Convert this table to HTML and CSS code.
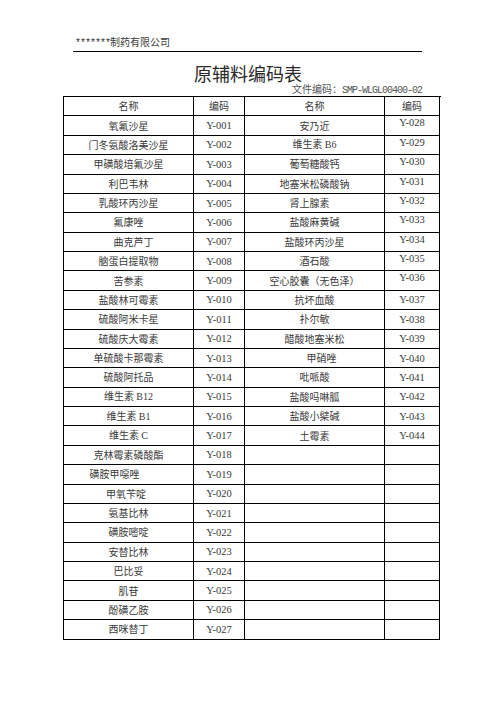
FILE: index.html
```html
<!DOCTYPE html>
<html lang="zh-CN">
<head>
<meta charset="utf-8">
<title>原辅料编码表</title>
<link rel="stylesheet" href="styles.css">
</head>
<body>
<div class="page">
  <div class="company"><span class="lat">*******</span>制药有限公司</div>
  <div class="title">原辅料编码表</div>
  <div class="docno">文件编码：<span class="lat">SMP-WLGL00400-02</span></div>
  <div class="sheet">
    <div class="cell head">名称</div><div class="cell head">编码</div><div class="cell head">名称</div><div class="cell head">编码</div>

    <div class="cell">氧氟沙星</div><div class="cell code">Y-001</div><div class="cell">安乃近</div><div class="cell code top">Y-028</div>
    <div class="cell">门冬氨酸洛美沙星</div><div class="cell code">Y-002</div><div class="cell"><span>维生素 <span class="ser">B6</span></span></div><div class="cell code top">Y-029</div>
    <div class="cell">甲磺酸培氟沙星</div><div class="cell code">Y-003</div><div class="cell">葡萄糖酸钙</div><div class="cell code top">Y-030</div>
    <div class="cell">利巴韦林</div><div class="cell code">Y-004</div><div class="cell">地塞米松磷酸钠</div><div class="cell code top">Y-031</div>
    <div class="cell">乳酸环丙沙星</div><div class="cell code">Y-005</div><div class="cell nudge-l">肾上腺素</div><div class="cell code top">Y-032</div>
    <div class="cell">氟康唑</div><div class="cell code">Y-006</div><div class="cell">盐酸麻黄碱</div><div class="cell code top">Y-033</div>
    <div class="cell nudge-r">曲克芦丁</div><div class="cell code">Y-007</div><div class="cell">盐酸环丙沙星</div><div class="cell code top">Y-034</div>
    <div class="cell">脑蛋白提取物</div><div class="cell code">Y-008</div><div class="cell">酒石酸</div><div class="cell code top">Y-035</div>
    <div class="cell">苦参素</div><div class="cell code">Y-009</div><div class="cell">空心胶囊（无色泽）</div><div class="cell code top">Y-036</div>
    <div class="cell">盐酸林可霉素</div><div class="cell code">Y-010</div><div class="cell">抗坏血酸</div><div class="cell code">Y-037</div>
    <div class="cell">硫酸阿米卡星</div><div class="cell code">Y-011</div><div class="cell">扑尔敏</div><div class="cell code">Y-038</div>
    <div class="cell">硫酸庆大霉素</div><div class="cell code">Y-012</div><div class="cell">醋酸地塞米松</div><div class="cell code">Y-039</div>
    <div class="cell">单硫酸卡那霉素</div><div class="cell code">Y-013</div><div class="cell nudge-r2">甲硝唑</div><div class="cell code">Y-040</div>
    <div class="cell">硫酸阿托品</div><div class="cell code">Y-014</div><div class="cell">吡哌酸</div><div class="cell code">Y-041</div>
    <div class="cell"><span>维生素 <span class="ser">B12</span></span></div><div class="cell code">Y-015</div><div class="cell">盐酸吗啉胍</div><div class="cell code">Y-042</div>
    <div class="cell"><span>维生素 <span class="ser">B1</span></span></div><div class="cell code">Y-016</div><div class="cell">盐酸小檗碱</div><div class="cell code">Y-043</div>
    <div class="cell"><span>维生素 <span class="ser">C</span></span></div><div class="cell code">Y-017</div><div class="cell">土霉素</div><div class="cell code">Y-044</div>
    <div class="cell">克林霉素磷酸酯</div><div class="cell code">Y-018</div><div class="cell"></div><div class="cell"></div>
    <div class="cell nudge-l2">磺胺甲噁唑</div><div class="cell code">Y-019</div><div class="cell"></div><div class="cell"></div>
    <div class="cell nudge-l3">甲氧苄啶</div><div class="cell code">Y-020</div><div class="cell"></div><div class="cell"></div>
    <div class="cell">氨基比林</div><div class="cell code">Y-021</div><div class="cell"></div><div class="cell"></div>
    <div class="cell">磺胺嘧啶</div><div class="cell code">Y-022</div><div class="cell"></div><div class="cell"></div>
    <div class="cell">安替比林</div><div class="cell code">Y-023</div><div class="cell"></div><div class="cell"></div>
    <div class="cell">巴比妥</div><div class="cell code">Y-024</div><div class="cell"></div><div class="cell"></div>
    <div class="cell">肌苷</div><div class="cell code">Y-025</div><div class="cell"></div><div class="cell"></div>
    <div class="cell">酚磺乙胺</div><div class="cell code">Y-026</div><div class="cell"></div><div class="cell"></div>
    <div class="cell">西咪替丁</div><div class="cell code">Y-027</div><div class="cell"></div><div class="cell"></div>
  </div>
</div>
</body>
</html>
```
FILE: styles.css
```css
html, body {
  margin: 0;
  padding: 0;
  background: #ffffff;
}

body {
  font-family: "Noto Sans CJK SC", "Noto Sans", sans-serif;
  color: #3a3a3a;
  width: 496px;
}

.page {
  padding-top: 35px;
}

.lat {
  font-family: "Liberation Mono", "Noto Sans CJK SC", monospace;
  letter-spacing: -1px;
}

.ser {
  font-family: "Liberation Serif", "Noto Sans CJK SC", serif;
}

.company {
  margin: 0 74px 0 73px;
  padding: 0 0 1px 2px;
  font-size: 10px;
  line-height: 13px;
  color: #3a3a3a;
  border-bottom: 1px solid #000000;
}

.title {
  margin-top: 10px;
  text-align: center;
  font-size: 18px;
  line-height: 22px;
  color: #2a2a2a;
}

.docno {
  text-align: right;
  padding-right: 74px;
  font-size: 10px;
  line-height: 10px;
  color: #555555;
}

.sheet {
  margin-left: 63px;
  width: 377px;
  display: grid;
  grid-template-columns: 130px 51px 140px 55px;
  grid-auto-rows: 19.39px;
  border-left: 1px solid #000000;
  border-top: 1px solid #000000;
}

.cell {
  box-sizing: border-box;
  border-right: 1px solid #000000;
  border-bottom: 1px solid #000000;
  display: flex;
  align-items: center;
  justify-content: center;
  font-size: 10px;
  line-height: 12px;
  white-space: nowrap;
  color: #3a3a3a;
}

.code {
  font-family: "Liberation Serif", serif;
  font-size: 10.5px;
  padding-top: 1px;
}

.code.top {
  align-items: flex-start;
  padding-top: 1px;
}

.nudge-r {
  padding-left: 10px;
}

.nudge-r2 {
  padding-left: 14px;
}

.nudge-l {
  padding-right: 10px;
}

.nudge-l2 {
  padding-right: 28px;
}

.nudge-l3 {
  padding-right: 5px;
}
```
